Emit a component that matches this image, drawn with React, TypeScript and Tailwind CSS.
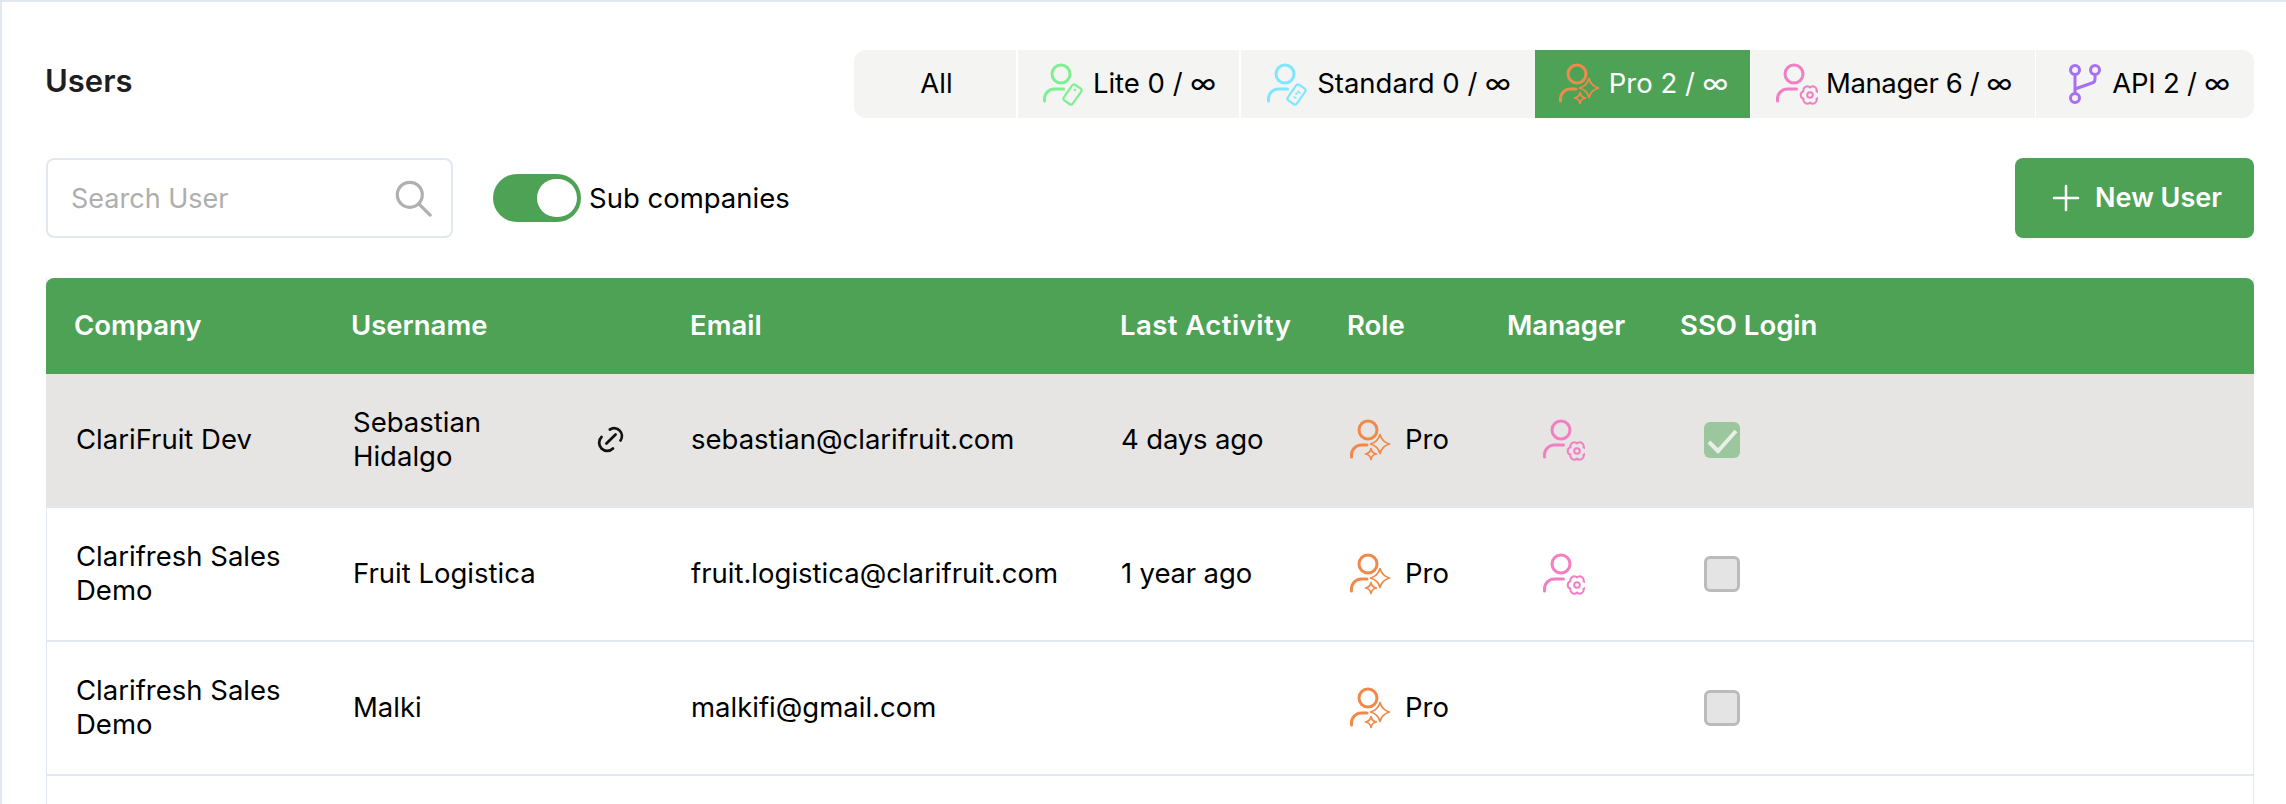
const Person = ({ color, shoulder = 22.5, children }: { color: string; shoulder?: number; children?: React.ReactNode }) => (
  <svg width="44" height="44" viewBox="0 0 44 44" fill="none" stroke={color} strokeWidth="3" strokeLinecap="round" strokeLinejoin="round" className="shrink-0">
    <circle cx="20" cy="12" r="9" />
    <path d={`M3.5 39v-2a10 10 0 0 1 10-10H${shoulder}`} />
    {children}
  </svg>
);

const LiteIcon = () => (
  <Person color="#7fef93">
    <rect x="26" y="23" width="11" height="19" rx="2.5" transform="rotate(35 31.5 32.5)" strokeWidth="2.2" />
    <circle cx="34" cy="28" r="0.6" strokeWidth="1.4" />
  </Person>
);

const StandardIcon = () => (
  <Person color="#80e6ff">
    <rect x="26" y="23" width="11" height="19" rx="2.5" transform="rotate(35 31.5 32.5)" strokeWidth="2.2" />
    <path d="M29 35l2 1M33 29l2 2M31 32l1.5-1" strokeWidth="1.6" />
  </Person>
);

const ProIcon = () => (
  <Person color="#f0894a" shoulder={19}>
    <path d="M32 16.5Q34 24 41.5 26Q34 28 32 35.5Q30 28 22.500 26Q30 24 32 16.5z" strokeWidth="1.7" />
    <path d="M23 30.500Q23.800 35.200 28.500 36Q23.800 36.800 23 41.500Q22.200 36.800 17.500 36Q22.200 35.200 23 30.500z" strokeWidth="1.7" />
  </Person>
);

const ManagerIcon = () => (
  <Person color="#f27fc4">
    <g strokeWidth="2">
      <circle cx="36" cy="33" r="2.8" />
      <path d="M36 25.500A3.900 3.900 0 0 1 42.500 29.250A3.900 3.900 0 0 1 42.500 36.750A3.900 3.900 0 0 1 36 40.500A3.900 3.900 0 0 1 29.500 36.750A3.900 3.900 0 0 1 29.500 29.250A3.900 3.900 0 0 1 36 25.500z" />
    </g>
  </Person>
);

const ApiIcon = () => (
  <svg width="44" height="44" viewBox="0 0 44 44" fill="none" stroke="#a76ff5" strokeWidth="3" strokeLinecap="round" strokeLinejoin="round" className="shrink-0">
    <circle cx="15" cy="8" r="4.5" />
    <circle cx="35" cy="8" r="4.5" />
    <circle cx="15" cy="36" r="4.5" />
    <path d="M15 13v18M35 13v4a4 4 0 0 1-3 4l-17 6" />
  </svg>
);

const tabs = [
  { label: "All", width: "w-[162px] pl-[3px]" },
  { label: "Lite 0 / ∞", icon: <LiteIcon />, width: "w-[221px] ml-[2px]" },
  { label: "Standard 0 / ∞", icon: <StandardIcon />, width: "w-[294px] ml-[2px]" },
  { label: "Pro 2 / ∞", icon: <ProIcon />, width: "w-[215px]", active: true },
  { label: "Manager 6 / ∞", icon: <ManagerIcon />, width: "w-[284px] ml-px tracking-[-0.4px]" },
  { label: "API 2 / ∞", icon: <ApiIcon />, width: "w-[218px] ml-px tracking-[-0.2px]" },
];

const columns = "grid grid-cols-[305px_339px_430px_227px_160px_173px_1fr]";

const rows = [
  { company: "ClariFruit Dev", user: "Sebastian Hidalgo", email: "sebastian@clarifruit.com", last: "4 days ago", manager: true, sso: true, selected: true, link: true },
  { company: "Clarifresh Sales Demo", user: "Fruit Logistica", email: "fruit.logistica@clarifruit.com", last: "1 year ago", manager: true, sso: false },
  { company: "Clarifresh Sales Demo", user: "Malki", email: "malkifi@gmail.com", last: "", manager: false, sso: false },
];

const Checkbox = ({ checked }: { checked: boolean }) =>
  checked ? (
    <div className="w-9 h-9 rounded-md bg-[#9cc69e]">
      <svg width="36" height="36" viewBox="0 0 36 36" fill="none" stroke="#e9efe6" strokeWidth="4">
        <path d="M5 20l9 9L32 9" />
      </svg>
    </div>
  ) : (
    <div className="w-9 h-9 rounded-md bg-[#e4e4e4] border-[3px] border-[#bbbbbb]" />
  );

export default function App() {
  return (
    <div className="h-[804px] overflow-hidden bg-white border-t-2 border-l-2 border-[#e2e8f0] font-['Inter',sans-serif] text-[27.5px] text-black pl-[44px] pr-[32px]">
      <div className="h-[156px]">
        <div className="flex items-center justify-between pt-[48px]">
          <h1 className="text-[31px] font-semibold text-[#1f1f1f] -mt-[6px] -ml-px">Users</h1>
          <div className="flex rounded-xl overflow-hidden">
            {tabs.map((t) => (
              <div
                key={t.label}
                className={`${t.width} h-[68px] flex items-center justify-center gap-[8px] ${t.active ? "bg-[#4ea256] text-white" : "bg-[#f4f4f2]"}`}
              >
                {t.icon}
                <span>{t.label}</span>
              </div>
            ))}
          </div>
        </div>
      </div>

      <div className="flex items-center justify-between h-[80px]">
        <div className="flex items-center">
          <div className="w-[407px] h-[80px] border-2 border-[#e2e8f0] rounded-lg flex items-center justify-between pl-[23px] pr-[19px]">
            <span className="text-[#aeaeae] text-[27px] pt-[3px]">Search User</span>
            <svg width="37" height="37" viewBox="0 0 40 40" fill="none" stroke="#b0b0b0" strokeWidth="3.5" strokeLinecap="round">
              <circle cx="16" cy="16" r="13.5" />
              <path d="M26 26l12 12" />
            </svg>
          </div>
          <div className="ml-[40px] w-[88px] h-[48px] rounded-full bg-[#4ea256] flex items-center justify-end pr-[4px]">
            <div className="w-[40px] h-[38px] rounded-full bg-white" />
          </div>
          <span className="ml-[8px] pt-px">Sub companies</span>
        </div>
        <button className="w-[239px] h-[80px] rounded-lg bg-[#4ea256] text-white text-[27px] font-semibold flex items-center justify-end pr-[32px] gap-[15px]">
          <svg width="28" height="28" viewBox="0 0 28 28" stroke="white" strokeWidth="2.5" strokeLinecap="round">
            <path d="M14 2v24M2 14h24" />
          </svg>
          New User
        </button>
      </div>

      <div className="mt-[40px] border-x border-[#e2e8f0]">
        <div className={`${columns} h-[96px] items-center bg-[#4ea256] text-white font-semibold rounded-t-lg -mx-px`}>
          {["Company", "Username", "Email", "Last Activity", "Role", "Manager", "SSO Login"].map((h, i) => (
            <div key={h} className={i === 0 ? "pl-[28px]" : i === 3 ? "tracking-[0.45px]" : ""}>{h}</div>
          ))}
        </div>
        {rows.map((r, i) => (
          <div key={i} className={`${columns} h-[134px] items-center border-b-2 border-[#e2e8f0] leading-[34px] -mx-px ${r.selected ? "bg-[#e6e5e3]" : ""}`}>
            <div className="pl-[30px] pr-[30px] pb-[2px]">{r.company}</div>
            <div className="pl-[2px] pb-[2px] flex items-center justify-between pr-[63px]">
              <span className={r.link ? "w-[150px]" : ""}>{r.user}</span>
              {r.link && (
                <svg width="32" height="32" viewBox="0 0 28 28" fill="none" stroke="#111" strokeWidth="2.4" strokeLinecap="round">
                  <path d="M13 5.7A6.8 6.8 0 0 1 22.3 15.3" />
                  <path d="M5.7 12.3A6.8 6.8 0 0 0 15.7 22.3" />
                  <path d="M10 18l8-8" />
                </svg>
              )}
            </div>
            <div className="pl-[1px] pb-[2px]">{r.email}</div>
            <div className="pl-[1px] pb-[2px] tracking-[-0.15px]">{r.last}</div>
            <div className="pl-[1px] flex items-center gap-[13px]"><ProIcon /><span className="pb-[2px]">Pro</span></div>
            <div className="pl-[34px]">{r.manager && <ManagerIcon />}</div>
            <div className="pl-[24px]"><Checkbox checked={r.sso} /></div>
          </div>
        ))}
        <div className="h-[100px]" />
      </div>
    </div>
  );
}
